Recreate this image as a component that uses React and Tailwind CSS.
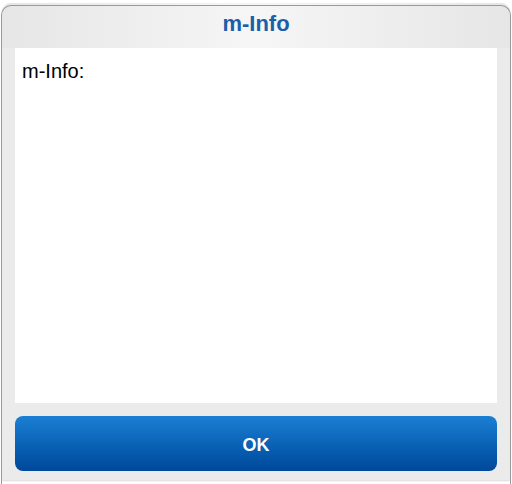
export default function App() {
  return (
    <div className="w-[512px] h-[484px] bg-white relative" style={{ fontFamily: '"Liberation Sans", Arial, sans-serif' }}>
      <div className="absolute left-[1px] right-[1px] top-[2px] bottom-0 border-x border-t border-[#9a9a9a] rounded-t-[10px]" />
      <div className="ml-[2px] mr-[2px] mt-[3px] h-[477px] rounded-t-[9px] bg-[#ebebeb] flex flex-col px-[13px] shadow-[0_1px_2px_rgba(0,0,0,0.15)]">
        <div className="h-[45px] -mx-[13px] rounded-t-[9px] bg-gradient-to-r from-[#e6e6e6] via-[#f6f6f6] to-[#e6e6e6] flex items-center justify-center">
          <span className="text-[22px] font-bold text-[#1a5fa8] leading-none mt-[-3px]">m-Info</span>
        </div>
        <div className="bg-white h-[355px] px-[7px] pt-[13px]">
          <span className="text-[20px] text-black leading-none">m-Info:</span>
        </div>
        <div className="mt-[13px] h-[55px] rounded-[8px] bg-gradient-to-b from-[#1b7fd4] to-[#00489a] flex items-center justify-center">
          <span className="text-[18px] font-bold text-white leading-none mt-[2px]">OK</span>
        </div>
      </div>
    </div>
  );
}
